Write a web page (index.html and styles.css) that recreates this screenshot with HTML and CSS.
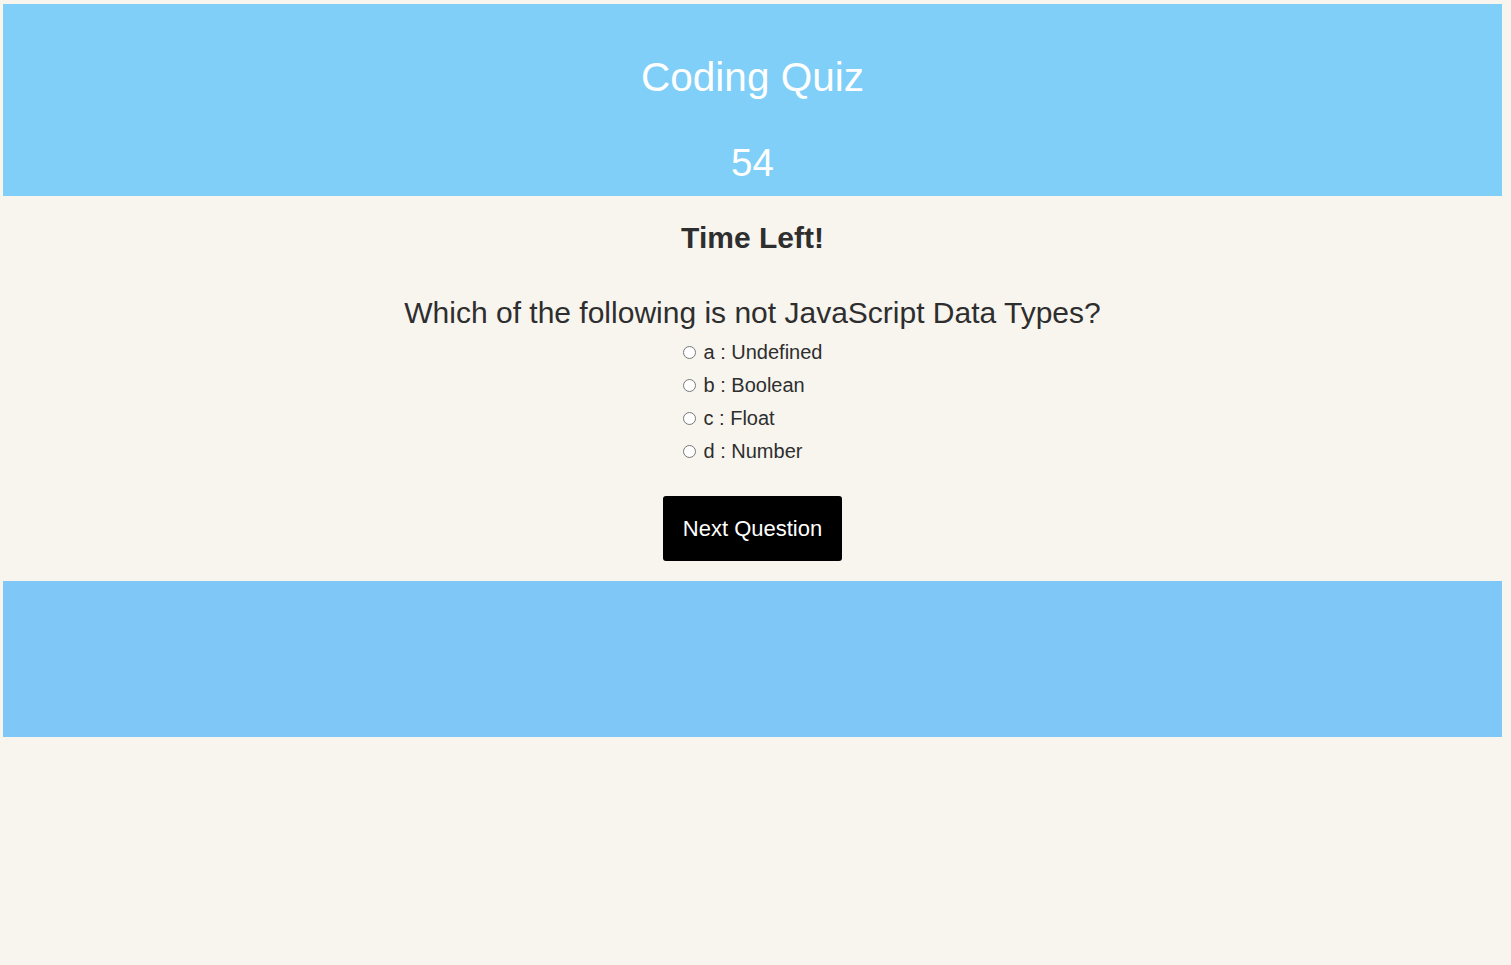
FILE: index.html
```html
<!DOCTYPE html>
<html lang="en">
<head>
<meta charset="utf-8">
<title>Coding Quiz</title>
<link rel="stylesheet" href="styles.css">
</head>
<body>
<header class="banner">
  <h1 class="title">Coding Quiz</h1>
  <div class="timer">54</div>
</header>
<main class="quiz">
  <h2 class="time-left">Time Left!</h2>
  <p class="question">Which of the following is not JavaScript Data Types?</p>
  <ul class="options">
    <li class="option"><label><input type="radio" name="q" class="radio"> a : Undefined</label></li>
    <li class="option"><label><input type="radio" name="q" class="radio"> b : Boolean</label></li>
    <li class="option"><label><input type="radio" name="q" class="radio"> c : Float</label></li>
    <li class="option"><label><input type="radio" name="q" class="radio"> d : Number</label></li>
  </ul>
  <button class="next-btn">Next Question</button>
</main>
<footer class="footer"></footer>
</body>
</html>
```
FILE: styles.css
```css
html, body {
  background: #f8f5ef;
}
body {
  margin: 4px 9px 0 3px;
  font-family: "Liberation Sans", Arial, sans-serif;
  color: #2e2e2e;
}
.banner {
  background: #7fcff8;
  color: #ffffff;
  text-align: center;
  padding: 49px 0 10px;
  height: 192px;
  box-sizing: border-box;
}
.title {
  margin: 0;
  font-size: 40.5px;
  font-weight: normal;
  line-height: 48px;
}
.timer {
  margin-top: 39px;
  font-size: 38.5px;
  line-height: 46px;
}
.quiz {
  text-align: center;
  display: flex;
  flex-direction: column;
  align-items: center;
}
.time-left {
  margin: 24px 0 0;
  font-size: 30px;
  font-weight: bold;
  line-height: 36px;
}
.question {
  margin: 39px 0 0;
  font-size: 30px;
  line-height: 36px;
}
.options {
  list-style: none;
  margin: 5px 0 0;
  padding: 0;
  display: flex;
  flex-direction: column;
  align-items: flex-start;
}
.option {
  font-size: 20px;
  line-height: 33px;
  height: 33px;
}
.option label {
  display: flex;
  align-items: center;
  gap: 8px;
}
.radio {
  margin: 0;
  width: 13px;
  height: 13px;
}
.next-btn {
  margin-top: 28px;
  background: #000;
  color: #fff;
  border: none;
  border-radius: 3px;
  width: 179px;
  height: 65px;
  font-family: "Liberation Sans", Arial, sans-serif;
  font-size: 22px;
  padding: 0;
}
.footer {
  margin-top: 20px;
  height: 156px;
  background: #7fc7f6;
}
```
